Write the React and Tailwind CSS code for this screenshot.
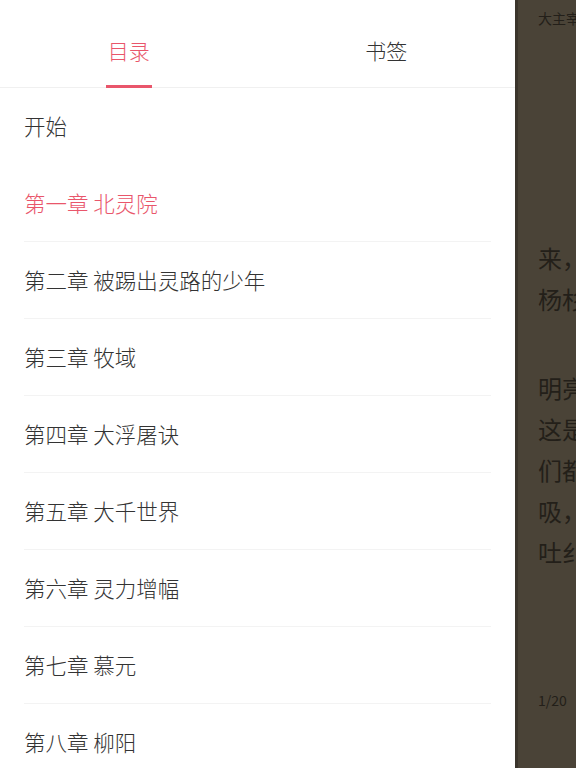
import { useState } from "react";

const chapters = [
  "开始",
  "第一章 北灵院",
  "第二章 被踢出灵路的少年",
  "第三章 牧域",
  "第四章 大浮屠诀",
  "第五章 大千世界",
  "第六章 灵力增幅",
  "第七章 慕元",
  "第八章 柳阳",
];

const font = { fontFamily: '"Noto Sans CJK SC", "Noto Sans", sans-serif' };

export default function App() {
  const [tab, setTab] = useState("toc");
  const current = 1;

  return (
    <div className="flex h-[768px] w-[576px] overflow-hidden bg-white" style={font}>
      {/* drawer */}
      <div className="flex w-[515px] shrink-0 flex-col bg-white">
        <div className="flex h-[88px] shrink-0 border-b border-[#f0f0f0]">
          {[
            ["toc", "目录"],
            ["marks", "书签"],
          ].map(([key, label]) => (
            <button
              key={key}
              onClick={() => setTab(key)}
              className={`relative flex flex-1 items-center justify-center pt-[14px] text-[21px] font-light ${
                tab === key ? "text-[#e9566b]" : "text-[#333333]"
              }`}
            >
              {label}
              {tab === key && (
                <span className="absolute bottom-[-1px] left-1/2 h-[3px] w-[46px] -translate-x-1/2 bg-[#e9566b]" />
              )}
            </button>
          ))}
        </div>

        <ul className="flex-1 overflow-hidden">
          {chapters.map((title, i) => (
            <li
              key={title}
              className={`mx-6 flex h-[77px] items-center text-[21.5px] font-light ${
                i > 0 ? "border-b border-[#f3f3f3]" : ""
              } ${i === current ? "text-[#e9566b]" : "text-[#333333]"}`}
            >
              {title}
            </li>
          ))}
        </ul>
      </div>

      {/* reader page behind the drawer */}
      <div className="flex min-w-0 flex-1 border-l-[3px] border-[#3b352c] bg-[#4a4337] pl-[20px] text-[#231f19]">
        <div className="flex min-w-0 flex-1 flex-col overflow-hidden whitespace-nowrap">
          <div className="pt-[8px] text-[14px]">大主宰</div>
          <div className="mt-[208px] text-[24px] leading-[41px]">
            <p>来，</p>
            <p>杨杉</p>
            <p className="mt-[48px]">明亮</p>
            <p>这是</p>
            <p>们都</p>
            <p>吸，</p>
            <p>吐纟</p>
          </div>
          <div className="mt-[118px] text-[14px]">1/20</div>
        </div>
      </div>
    </div>
  );
}
